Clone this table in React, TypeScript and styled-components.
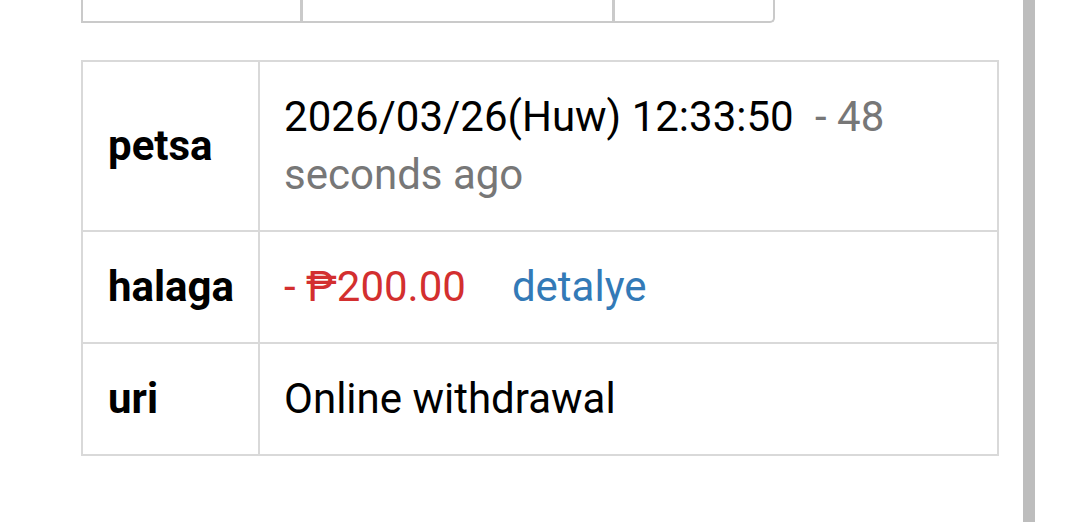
import React from 'react'
import styled, { createGlobalStyle } from 'styled-components'

const GlobalStyle = createGlobalStyle`
  html, body {
    margin: 0;
    padding: 0;
    background: #ffffff;
    font-family: Roboto, "Liberation Sans", Arial, sans-serif;
  }
`

const Page = styled.div`
  display: flex;
  width: 1080px;
  height: 522px;
  overflow: hidden;
`

const Main = styled.div`
  flex: 1;
  padding-left: 81px;
`

const ScrollTrack = styled.div`
  width: 60px;
  display: flex;
`

const ScrollThumb = styled.div`
  width: 12px;
  margin-left: 3px;
  background: #bdbdbd;
`

// the tab strip that is cut off at the top of the screen
const TabStrip = styled.div`
  display: flex;
  width: 694px;
  height: 60px;
  margin-top: -37px;
  border: 2px solid #cacaca;
  border-top: none;
  border-radius: 0 0 5px 0;
  box-sizing: border-box;
`

const Tab = styled.div<{ w: number; last?: boolean }>`
  width: ${({ w }) => w}px;
  flex: ${({ last }) => (last ? 1 : 'none')};
  border-right: ${({ last }) => (last ? 'none' : '3px solid #cacaca')};
`

const DetailTable = styled.table`
  width: 918px;
  margin-top: 37px;
  border-collapse: collapse;
  font-size: 42px;
  line-height: 58px;
`

const Label = styled.th`
  width: 126px;
  padding: 26px 24px 26px 25px;
  border: 2px solid #d9d9d9;
  text-align: left;
  font-weight: 700;
  color: #000;
  vertical-align: middle;
`

const Value = styled.td`
  padding: 26px 26px 26px 24px;
  border: 2px solid #d9d9d9;
  color: #000;
  vertical-align: middle;
`

const Muted = styled.span`
  color: #777777;
  margin-left: 11px;
`

const Amount = styled.span`
  color: #d32f2f;
`

const DetailLink = styled.a`
  color: #337ab7;
  text-decoration: none;
  margin-left: 46px;
`

export default function App() {
  return (
    <>
      <GlobalStyle />
      <Page>
        <Main>
          <TabStrip>
            <Tab w={217} />
            <Tab w={309} />
            <Tab w={0} last />
          </TabStrip>
          <DetailTable>
            <tbody>
              <tr>
                <Label>petsa</Label>
                <Value>
                  2026/03/26(Huw) 12:33:50 <Muted>- 48 seconds ago</Muted>
                </Value>
              </tr>
              <tr>
                <Label>halaga</Label>
                <Value>
                  <Amount>- ₱200.00</Amount>
                  <DetailLink href="#">detalye</DetailLink>
                </Value>
              </tr>
              <tr>
                <Label>uri</Label>
                <Value>Online withdrawal</Value>
              </tr>
            </tbody>
          </DetailTable>
        </Main>
        <ScrollTrack>
          <ScrollThumb />
        </ScrollTrack>
      </Page>
    </>
  )
}
